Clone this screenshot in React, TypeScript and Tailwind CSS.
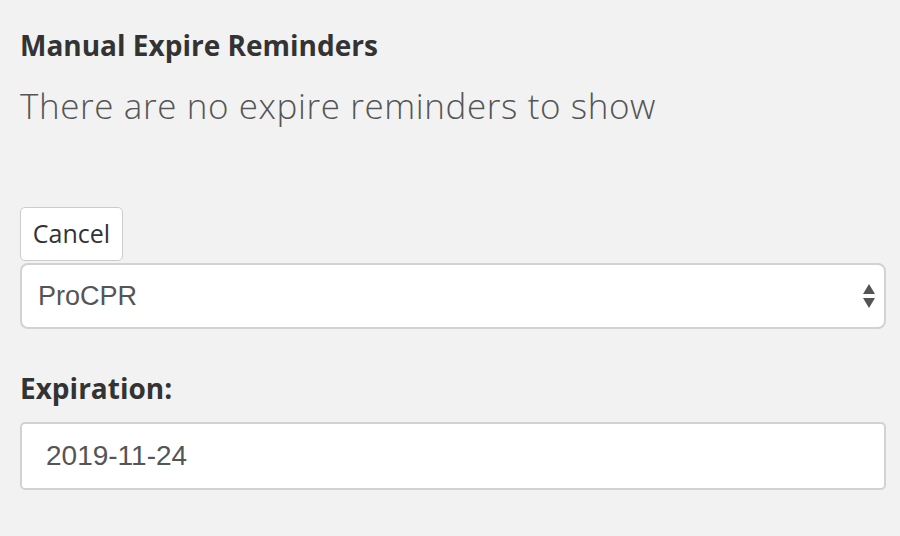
import * as React from "react";

const SortArrows = () => (
  <svg width="14" height="26" viewBox="0 0 14 26" className="text-[#555]">
    <polygon points="7,1 13,11 1,11" fill="currentColor" />
    <polygon points="1,15 13,15 7,25" fill="currentColor" />
  </svg>
);

const App = () => {
  return (
    <div className="min-h-[536px] w-[900px] bg-[#f2f2f2] px-5 pt-[26px] font-['Open_Sans',sans-serif] text-[#333]">
      <h3 className="text-[28px] font-bold leading-[38px]">
        Manual Expire Reminders
      </h3>
      <p className="mt-[21px] text-[35px] font-light leading-[42px] tracking-[0.6px] text-[#555]">
        There are no expire reminders to show
      </p>

      <div className="mt-[80px] flex flex-col">
        <button className="w-[103px] h-[54px] rounded-[5px] border border-[#ccc] bg-white text-[25px] text-[#333]">
          Cancel
        </button>
        <div className="mt-[2px] flex h-[66px] w-[866px] items-center justify-between rounded-[8px] border-2 border-[#d2d2d2] bg-white pl-[16px] pr-[8px]">
          <span className="font-['Liberation_Sans',Arial,sans-serif] text-[27px] text-[#555]">
            ProCPR
          </span>
          <SortArrows />
        </div>
      </div>

      <label className="mt-[40px] block text-[28px] font-bold leading-[38px]">
        Expiration:
      </label>
      <div className="mt-[15px] flex h-[68px] w-[866px] items-center rounded-[5px] border-2 border-[#d2d2d2] bg-white pl-[24px]">
        <span className="font-['Liberation_Sans',Arial,sans-serif] text-[28px] text-[#555]">
          2019-11-24
        </span>
      </div>
    </div>
  );
};

export default App;
